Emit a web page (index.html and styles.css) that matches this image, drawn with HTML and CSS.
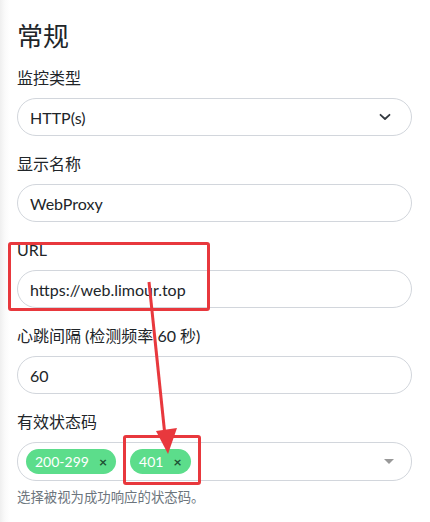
FILE: index.html
```html
<!DOCTYPE html>
<html lang="zh-CN">
<head>
<meta charset="utf-8">
<link rel="stylesheet" href="styles.css">
</head>
<body>
<div class="page">
  <h2 class="title">常规</h2>

  <div class="field">
    <label class="label">监控类型</label>
    <div class="control select">
      <span>HTTP(s)</span>
      <svg class="chev" width="12" height="8" viewBox="0 0 12 8"><path d="M1.5 1.8 L6 6 L10.5 1.8" fill="none" stroke="#343a40" stroke-width="1.8" stroke-linecap="round" stroke-linejoin="round"/></svg>
    </div>
  </div>

  <div class="field">
    <label class="label">显示名称</label>
    <div class="control">WebProxy</div>
  </div>

  <div class="field">
    <label class="label">URL</label>
    <div class="control">https://web.limour.top</div>
  </div>

  <div class="field">
    <label class="label">心跳间隔 (检测频率 60 秒)</label>
    <div class="control">60</div>
  </div>

  <div class="field last">
    <label class="label">有效状态码</label>
    <div class="control multi">
      <span class="tag">200-299<span class="x">×</span></span>
      <span class="tag">401<span class="x">×</span></span>
      <span class="caret"></span>
    </div>
    <div class="hint">选择被视为成功响应的状态码。</div>
  </div>
</div>

<div class="mark mark-url"></div>
<div class="mark mark-tag"></div>
<svg class="arrow" width="430" height="522" viewBox="0 0 430 522">
  <line x1="149" y1="282" x2="165" y2="436" stroke="#e8383d" stroke-width="3"/>
  <polygon points="156,431 177,428 168,454" fill="#e8383d"/>
</svg>
</body>
</html>
```

FILE: styles.css
```css
html, body {
  margin: 0;
  padding: 0;
}
body {
  background: linear-gradient(to right, #efefef 0, #fafafa 5px, #ffffff 10px);
  font-family: "Lato", "Noto Sans CJK SC", sans-serif;
  color: #212529;
  width: 430px;
  height: 522px;
  overflow: hidden;
  position: relative;
}
.page {
  padding: 21px 18px 0 17px;
}
.title {
  margin: 0 0 14px;
  font-size: 26px;
  font-weight: 400;
  line-height: 31px;
}
.field {
  margin-bottom: 16px;
}
.label {
  display: block;
  font-size: 16px;
  line-height: 24px;
  margin-bottom: 8px;
}
.control {
  box-sizing: border-box;
  height: 38px;
  border: 1px solid #d2d6dc;
  border-radius: 19px;
  background: #fff;
  padding: 0 12px;
  display: flex;
  align-items: center;
  font-size: 16px;
}
.select {
  justify-content: space-between;
  padding-right: 20px;
}
.chev {
  display: block;
}
.multi {
  height: 39px;
  padding: 0 8px;
  gap: 14px;
  position: relative;
}
.tag {
  display: inline-flex;
  align-items: center;
  height: 25px;
  border-radius: 13px;
  background: #5cdd8b;
  color: #fff;
  font-size: 14px;
  padding: 0 9px 0 9px;
  gap: 10px;
}
.x {
  color: #1d4f33;
  font-size: 14px;
  font-weight: 700;
  line-height: 1;
}
.caret {
  position: absolute;
  right: 17px;
  top: 16px;
  width: 0;
  height: 0;
  border-left: 5px solid transparent;
  border-right: 5px solid transparent;
  border-top: 5px solid #999;
}
.hint {
  margin-top: 6px;
  font-size: 13.4px;
  line-height: 20px;
  color: #6c757d;
}
.mark {
  position: absolute;
  box-sizing: border-box;
  border: 3px solid #e8383d;
  border-radius: 3px;
}
.mark-url {
  left: 8px;
  top: 242px;
  width: 202px;
  height: 69px;
}
.mark-tag {
  left: 123px;
  top: 435px;
  width: 78px;
  height: 50px;
}
.arrow {
  position: absolute;
  left: 0;
  top: 0;
}
```
